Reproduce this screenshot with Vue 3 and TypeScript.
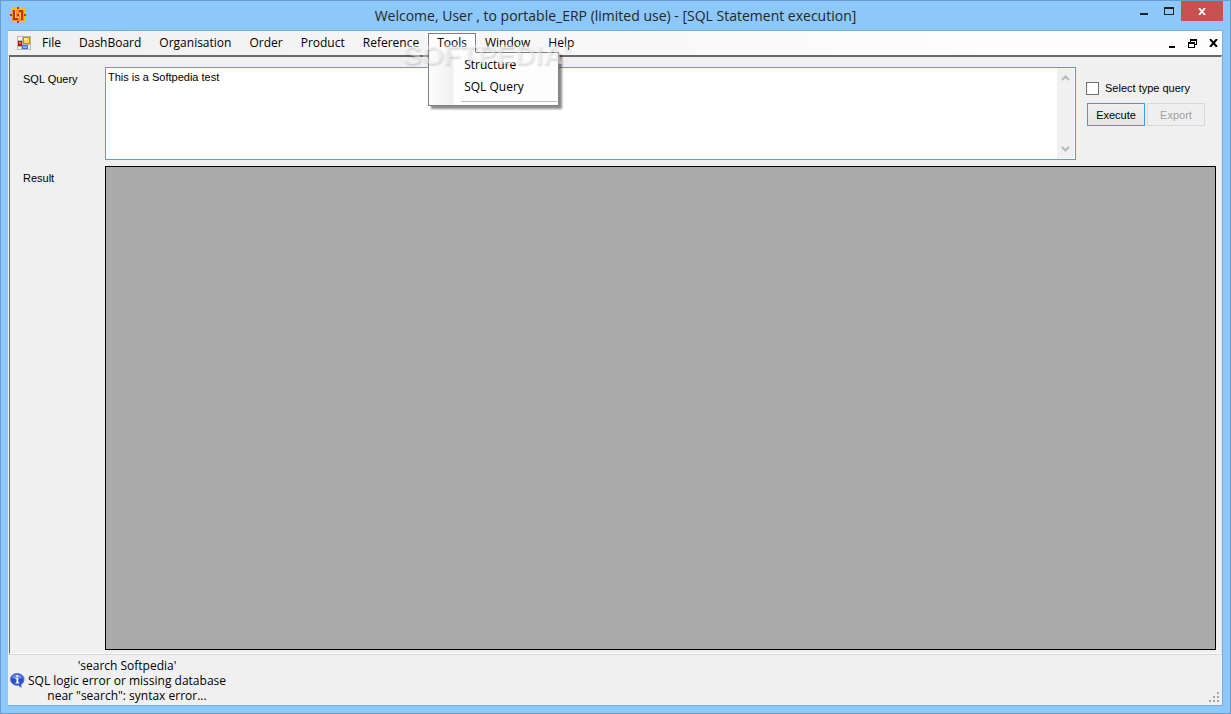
<script setup lang="ts">
import { ref } from 'vue'

const menus: string[] = ['File', 'DashBoard', 'Organisation', 'Order', 'Product', 'Reference', 'Tools', 'Window', 'Help']
const openMenu = ref('Tools')
const query = ref('This is a Softpedia test')
const selectType = ref(false)
</script>

<template>
  <div class="window">
    <header class="titlebar">
      <svg class="app-icon" width="16" height="16" viewBox="0 0 16 16" shape-rendering="crispEdges">
        <rect x="1" y="1" width="14" height="14" fill="#ffc400" />
        <rect x="2" y="3" width="12" height="11" fill="#ff8a2a" />
        <path d="M3 3h2v8h3v2H3zM9 3h4v10h-2V5H9z" fill="#b83a12" />
        <path d="M5 3h1v7h3v1H5zM8 5h1v3h1v3h1V6H9V5z" fill="#ffd23a" />
        <path d="M7 0h2v2H7zM7 14h2v2H7zM0 7h2v2H0zM14 7h2v2h-2zM7 7h2v2H7z" fill="#f01820" />
      </svg>
      <h1 class="title">Welcome, User , to portable_ERP (limited use) - [SQL Statement execution]</h1>
      <div class="caption-buttons">
        <button class="cap min" aria-label="Minimize"><svg width="8" height="13" viewBox="0 0 8 13"><rect y="10" width="8" height="2" fill="#222" /></svg></button>
        <button class="cap max" aria-label="Maximize"><svg width="10" height="8" viewBox="0 0 10 8" shape-rendering="crispEdges"><path d="M0 0h10v8H0zM1 2v5h8V2z" fill="#222" fill-rule="evenodd" /></svg></button>
        <button class="cap close" aria-label="Close"><svg width="8" height="7" viewBox="0 0 8 7"><path d="M1 0l6 7M7 0L1 7" stroke="#fff" stroke-width="1.8" /></svg></button>
      </div>
    </header>

    <div class="client">
      <nav class="menubar">
        <svg class="form-icon" width="14" height="14" viewBox="0 0 14 14" shape-rendering="crispEdges">
          <rect width="14" height="14" fill="#b8b8b8" />
          <path d="M1 1h4v3H1zM1 11h3v2H1zM11 9h2v4h-2z" fill="#f2f2f2" />
          <rect x="6" y="1" width="7" height="7" fill="#c08a10" />
          <rect x="7" y="2" width="5" height="5" fill="#ffd65a" />
          <rect x="7" y="2" width="3" height="2" fill="#fff0a8" />
          <rect x="1" y="5" width="4" height="5" fill="#a81c10" />
          <rect x="2" y="6" width="2" height="2" fill="#e87060" />
          <rect x="5" y="9" width="6" height="4" fill="#3a70d8" />
          <rect x="6" y="10" width="4" height="2" fill="#80b0ff" />
        </svg>
        <div class="menu-items">
          <div v-for="m in menus" :key="m" class="menu-item">
            <button class="menu-button" :class="{ open: openMenu === m }" @click="openMenu = m">{{ m }}</button>
            <div v-if="m === 'Tools' && openMenu === m" class="dropdown">
              <button class="entry">Structure</button>
              <button class="entry">SQL Query</button>
              <div class="separator"></div>
            </div>
          </div>
        </div>
        <div class="mdi-buttons">
          <button aria-label="Minimize child"><svg width="7" height="9" viewBox="0 0 7 9"><rect y="7" width="6" height="2" /></svg></button>
          <button aria-label="Restore child"><svg width="9" height="9" viewBox="0 0 9 9" shape-rendering="crispEdges"><path d="M2 0h7v6H7V5h1V2H3v1H2zM0 3h7v6H0zM1 5v3h5V5z" fill-rule="evenodd" /></svg></button>
          <button aria-label="Close child"><svg width="9" height="8" viewBox="0 0 9 8"><path d="M1 0l7 8M8 0L1 8" stroke="#000" stroke-width="2" /></svg></button>
        </div>
        <div class="watermark" aria-hidden="true">SOFTPEDIA<span>®</span></div>
      </nav>

      <main class="workspace">
        <label class="field-label" for="query">SQL Query</label>
        <div class="query-row">
          <div class="query-box">
            <textarea id="query" v-model="query" spellcheck="false"></textarea>
            <div class="scrollbar">
              <svg width="9" height="6" viewBox="0 0 9 6"><path d="M1 5l3.500-3.500L8 5" fill="none" stroke="#b9b9b9" stroke-width="2" /></svg>
              <svg width="9" height="6" viewBox="0 0 9 6"><path d="M1 1l3.500 3.500L8 1" fill="none" stroke="#b9b9b9" stroke-width="2" /></svg>
            </div>
          </div>
          <div class="side">
            <label class="check"><input v-model="selectType" type="checkbox" />Select type query</label>
            <div class="actions">
              <button class="btn primary">Execute</button>
              <button class="btn" disabled>Export</button>
            </div>
          </div>
        </div>
        <div class="field-label">Result</div>
        <div class="result"></div>
      </main>

      <footer class="status">
        <svg class="info" width="15" height="15" viewBox="0 0 15 15">
          <path d="M7 0.500C3.200 0.500 0.500 3 0.500 6.300S3.200 12 6.500 12.300c1 0 1.800 0 2.300-.1.300 1 1.200 1.700 2.500 2-.5-.8-.5-2-.1-2.900C13 10.300 14 8.500 14 6.400 14 3 11 .5 7 .5z" fill="#2b50c4" stroke="#5a7be0" />
          <path d="M2 5C2.500 2.500 4.500 1.500 7 1.500s4.800 1.200 5.300 3.500C9 6 5 6 2 5z" fill="#6d8fec" />
          <path d="M6.300 2.200h2v1.700h-2zM5.500 5h2.800v4.500h1v1H5.500v-1h1V6h-1z" fill="#fff" />
        </svg>
        <p class="message">'search Softpedia'<br />SQL logic error or missing database<br />near "search": syntax error...</p>
        <svg class="grip" width="10" height="10" viewBox="0 0 10 10" shape-rendering="crispEdges"><path d="M8 0h2v2H8zM4 4h2v2H4zM8 4h2v2H8zM0 8h2v2H0zM4 8h2v2H4zM8 8h2v2H8z" fill="#a5a5a5" /></svg>
      </footer>
    </div>
  </div>
</template>

<style>
body { margin: 0; }
</style>

<style scoped>
* { box-sizing: border-box; }
button { font: inherit; color: inherit; margin: 0; padding: 0; border: 0; background: none; }
svg { display: block; flex: none; }
.window {
  display: flex;
  flex-direction: column;
  min-height: 100vh;
  padding: 0 7px 7px;
  border: 1px solid #6c9bc8;
  background: #8dc8fa;
  font-family: "Open Sans", "Noto Sans", sans-serif;
  font-size: 12px;
  color: #000;
}
.titlebar { display: grid; grid-template-columns: 92px 1fr 92px; height: 29px; }
.app-icon { margin: 6px 0 0 2px; }
.title { margin: 0; text-align: center; font-size: 14px; font-weight: 400; line-height: 29px; color: #262626; white-space: nowrap; }
.caption-buttons { display: flex; justify-content: flex-end; }
.cap { display: flex; align-items: flex-start; justify-content: center; height: 20px; }
.cap.min { width: 27px; padding-top: 2px; }
.cap.max { width: 27px; padding-top: 6px; }
.cap.close { width: 45px; align-items: center; background: #c75050; }
.client { flex: 1; display: flex; flex-direction: column; border: 1px solid #78aede; border-width: 1px 1px 1px 0; background: #f0f0f0; }
.menubar { position: relative; display: flex; align-items: center; height: 24px; padding: 0 4px 0 9px; background: linear-gradient(90deg, #f0f0f0, #fdfdfd 80%); }
.menu-items { display: flex; flex: 1; margin-left: 2px; }
.menu-item { position: relative; }
.menu-button { display: block; height: 20px; padding: 0 8px; border: 1px solid transparent; line-height: 18px; }
.menu-button.open { position: relative; z-index: 3; border-color: #808080; border-bottom-color: #fdfdfd; background: #fdfdfd; }
.dropdown { position: absolute; z-index: 2; top: 19px; left: 0; width: 131px; padding: 1px 1px 3px; border: 1px solid #808080; background: linear-gradient(90deg, #fcfcfc, #f0f0f0 24px, #fdfdfd 25px); box-shadow: 3px 3px 2px rgba(0, 0, 0, 0.45); }
.entry { display: block; width: 100%; height: 22px; padding-left: 34px; text-align: left; line-height: 22px; }
.separator { height: 1px; margin: 3px 0 0 31px; background: #bdbdbd; }
.mdi-buttons { display: flex; align-items: center; gap: 12px; }
.watermark { position: absolute; z-index: 4; top: 2px; left: 395px; font: bold 28px/32px "Liberation Sans", Arial, sans-serif; color: rgba(255, 255, 255, 0.45); text-shadow: 1px 2px 2px rgba(0, 0, 0, 0.13); pointer-events: none; }
.watermark span { font-size: 10px; vertical-align: 12px; }
.workspace {
  flex: 1;
  display: grid;
  grid-template-columns: 82px 1fr;
  grid-template-rows: 93px 1fr;
  row-gap: 6px;
  margin-left: 1px;
  padding: 10px 5px 3px 13px;
  border: 1px solid #696969;
  border-top: 2px solid #696969;
  border-right-color: #e3e3e3;
  border-bottom-color: #fff;
  font-family: "Liberation Sans", Arial, sans-serif;
  font-size: 11px;
}
.field-label { line-height: 13px; padding-top: 6px; }
.field-label[for] { padding-top: 6px; }
.query-row { display: flex; }
.query-box { flex: 1; display: flex; border: 1px solid #569de5; background: #fff; padding: 1px; }
textarea { flex: 1; resize: none; border: 0; outline: 0; margin: 0; padding: 2px 1px; background: #fff; font: inherit; line-height: 13px; color: #000; overflow: hidden; }
.scrollbar { width: 17px; display: flex; flex-direction: column; justify-content: space-between; align-items: center; padding: 6px 0; background: #f0f0f0; }
.side { width: 140px; padding: 14px 0 0 11px; }
.check { display: flex; align-items: center; gap: 6px; height: 14px; margin-bottom: 8px; margin-left: -1px; font-size: 11px; }
.check input { appearance: none; width: 13px; height: 13px; margin: 0; border: 1px solid #707070; background: #fff; }
.check input:checked { background: #569de5; }
.actions { display: flex; gap: 2px; }
.btn { width: 58px; height: 23px; border: 1px solid #acacac; background: linear-gradient(#f0f0f0, #e5e5e5); }
.btn.primary { border-color: #3399ff; }
.btn:disabled { border-color: #d9d9d9; background: #efefef; color: #a0a0a0; }
.result { border: 1px solid #000; background: #ababab; }
.status { display: flex; align-items: center; height: 51px; padding-left: 2px; border-top: 1px solid #d7d7d7; }
.message { flex: 1; margin: 0 0 0 3px; line-height: 15px; }
.message { flex: none; text-align: center; }
.grip { margin: auto 3px 3px auto; }
</style>
